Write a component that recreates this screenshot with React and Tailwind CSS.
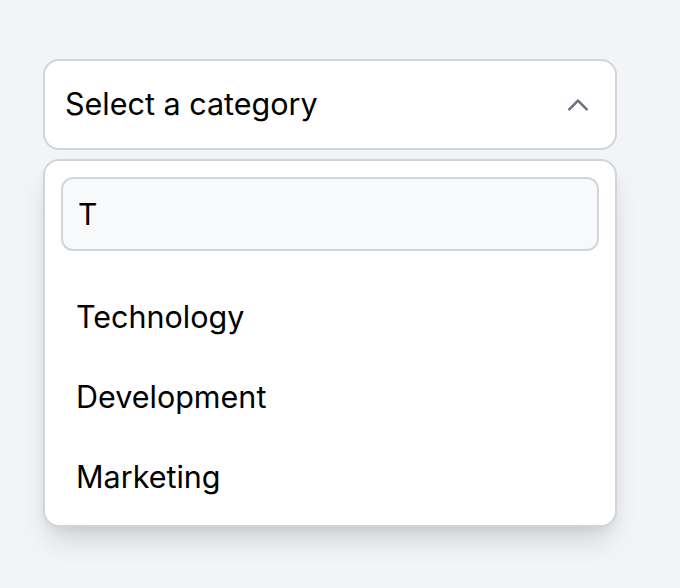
import React, { useState } from 'react';

const categories = ['Technology', 'Development', 'Marketing'];

const App = () => {
  const [query, setQuery] = useState('T');

  return (
    <div
      className="min-h-[588px] w-full bg-[#f3f4f6] pt-[59px] pl-[43px]"
      style={{ fontFamily: 'Inter, "Noto Sans", sans-serif' }}
    >
      <div className="w-[574px]">
        {/* Trigger */}
        <button className="flex h-[91px] w-full items-center justify-between rounded-[16px] border-2 border-[#d1d5db] bg-white pl-[20px] pr-[22px] text-left">
          <span className="text-[30.5px] leading-none text-black">Select a category</span>
          <svg width="30" height="30" viewBox="0 0 24 24" fill="none" stroke="#6b7280" strokeWidth="2" strokeLinecap="round" strokeLinejoin="round">
            <path d="M5 15.5l7-7 7 7" />
          </svg>
        </button>

        {/* Dropdown */}
        <div className="mt-[9px] rounded-[16px] border-2 border-[#d1d5db] bg-white shadow-[0_18px_30px_-6px_rgba(0,0,0,0.14),0_6px_12px_-4px_rgba(0,0,0,0.08)]">
          <div className="p-[16px]">
            <input
              value={query}
              onChange={(e) => setQuery(e.target.value)}
              className="h-[74px] w-full rounded-[12px] border-2 border-[#d1d5db] bg-[#f8f9fb] px-[15px] text-[30px] text-black outline-none"
              style={{ fontFamily: 'Inter, "Noto Sans", sans-serif' }}
            />
          </div>
          <div className="pt-[10px] pb-[8px]">
            {categories.map((c) => (
              <div key={c} className="flex h-[80px] items-center px-[31px] text-[30.5px] text-black">
                {c}
              </div>
            ))}
          </div>
        </div>
      </div>
    </div>
  );
};

export default App;
